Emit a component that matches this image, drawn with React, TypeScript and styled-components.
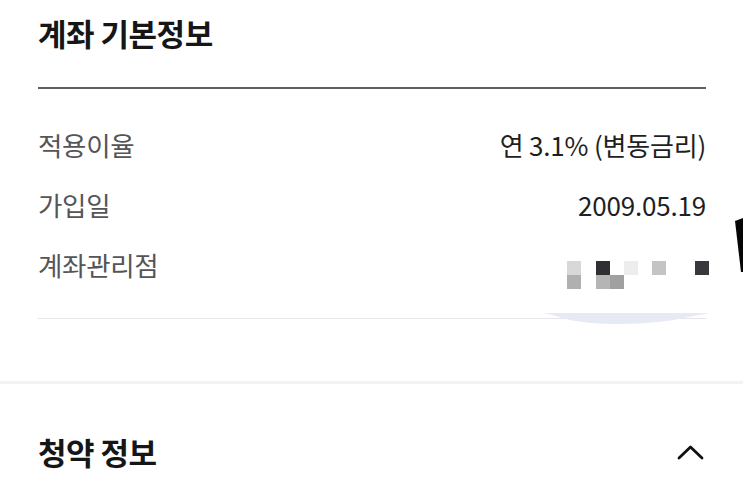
import React from "react";
import styled, { createGlobalStyle } from "styled-components";

const GlobalStyle = createGlobalStyle`
  html, body {
    margin: 0;
    padding: 0;
    background: #ffffff;
  }
  body {
    font-family: "Noto Sans CJK KR", "Noto Sans", sans-serif;
    -webkit-font-smoothing: antialiased;
  }
`;

type Row = { label: string; value?: string; masked?: boolean };

const rows: Row[] = [
  { label: "적용이율", value: "연 3.1% (변동금리)" },
  { label: "가입일", value: "2009.05.19" },
  { label: "계좌관리점", masked: true },
];

// mosaic pixels: [row, col, colour]
const mosaic: [number, number, string][] = [
  [0, 0, "#d8d8d8"],
  [0, 2, "#2e3033"],
  [0, 4, "#ededed"],
  [0, 6, "#c4c4c4"],
  [0, 9, "#37393c"],
  [1, 0, "#b0b0b0"],
  [1, 2, "#b5b5b5"],
  [1, 3, "#a0a0a0"],
];

export default function App() {
  return (
    <>
      <GlobalStyle />
      <Page>
        <Section>
          <SectionTitle>계좌 기본정보</SectionTitle>
          <ThickDivider />
          <InfoList>
            {rows.map((row) => (
              <InfoRow key={row.label}>
                <InfoLabel>{row.label}</InfoLabel>
                {row.masked ? (
                  <Mosaic aria-label="가려진 정보">
                    {mosaic.map(([r, c, color], i) => (
                      <MosaicCell key={i} $row={r} $col={c} $color={color} />
                    ))}
                  </Mosaic>
                ) : (
                  <InfoValue>{row.value}</InfoValue>
                )}
              </InfoRow>
            ))}
          </InfoList>
          <BottomRule>
            <Smudge viewBox="0 0 165 14" preserveAspectRatio="none">
              <path d="M0 1 L165 1 L150 4 Q110 13 70 12 Q30 11 12 4 Z" fill="#e5eaf3" />
            </Smudge>
          </BottomRule>
        </Section>
        <GroupSeparator />
        <AccordionHeader>
          <AccordionTitle>청약 정보</AccordionTitle>
          <ChevronButton aria-label="접기">
            <svg width="27" height="15" viewBox="0 0 27 15">
              <path
                d="M2 13 L13.5 2 L25 13"
                fill="none"
                stroke="#111"
                strokeWidth="2.8"
                strokeLinecap="round"
                strokeLinejoin="round"
              />
            </svg>
          </ChevronButton>
        </AccordionHeader>
        <EdgeMark viewBox="0 0 8 56" aria-hidden>
          <path d="M0 3 L8 0 L8 54 L6 54 Z" fill="#050505" />
        </EdgeMark>
      </Page>
    </>
  );
}

const Page = styled.div`
  position: relative;
  width: 743px;
  height: 494px;
  overflow: hidden;
  background: #fff;
`;

const Section = styled.section`
  padding: 13px 37px 0 38px;
`;

const SectionTitle = styled.h2`
  margin: 0 0 34px;
  font-size: 31px;
  line-height: 40px;
  font-weight: 700;
  letter-spacing: -0.5px;
  color: #161616;
`;

const ThickDivider = styled.div`
  height: 2px;
  background: #5f6063;
`;

const InfoList = styled.div`
  display: flex;
  flex-direction: column;
  padding-top: 26px;
`;

const InfoRow = styled.div`
  display: flex;
  align-items: center;
  justify-content: space-between;
  height: 60px;
`;

const InfoLabel = styled.span`
  font-size: 26.5px;
  line-height: 34px;
  color: #555558;
  letter-spacing: -0.3px;
`;

const InfoValue = styled.span`
  font-size: 26px;
  line-height: 34px;
  color: #1f1f22;
  letter-spacing: -0.2px;
`;

const Mosaic = styled.div`
  display: grid;
  grid-template-columns: repeat(10, 14.2px);
  grid-template-rows: repeat(2, 14px);
  margin-top: 20px;
  margin-right: -3px;
`;

const MosaicCell = styled.span<{ $row: number; $col: number; $color: string }>`
  grid-row: ${({ $row }) => $row + 1};
  grid-column: ${({ $col }) => $col + 1};
  background: ${({ $color }) => $color};
`;

const BottomRule = styled.div`
  position: relative;
  margin-top: 23px;
  height: 1px;
  background: #e6e6ea;
`;

const Smudge = styled.svg`
  position: absolute;
  right: -3px;
  top: -6px;
  width: 165px;
  height: 14px;
`;

const GroupSeparator = styled.div`
  margin-top: 62px;
  height: 3px;
  background: #f1f1f6;
`;

const AccordionHeader = styled.div`
  display: flex;
  align-items: center;
  justify-content: space-between;
  padding: 48px 39px 0 38px;
`;

const AccordionTitle = styled.h3`
  margin: 0;
  font-size: 31px;
  line-height: 40px;
  font-weight: 700;
  letter-spacing: -0.5px;
  color: #161616;
`;

const ChevronButton = styled.button`
  display: flex;
  align-items: center;
  justify-content: center;
  padding: 0;
  border: 0;
  background: none;
`;

const EdgeMark = styled.svg`
  position: absolute;
  right: 0;
  top: 218px;
  width: 8px;
  height: 56px;
`;
